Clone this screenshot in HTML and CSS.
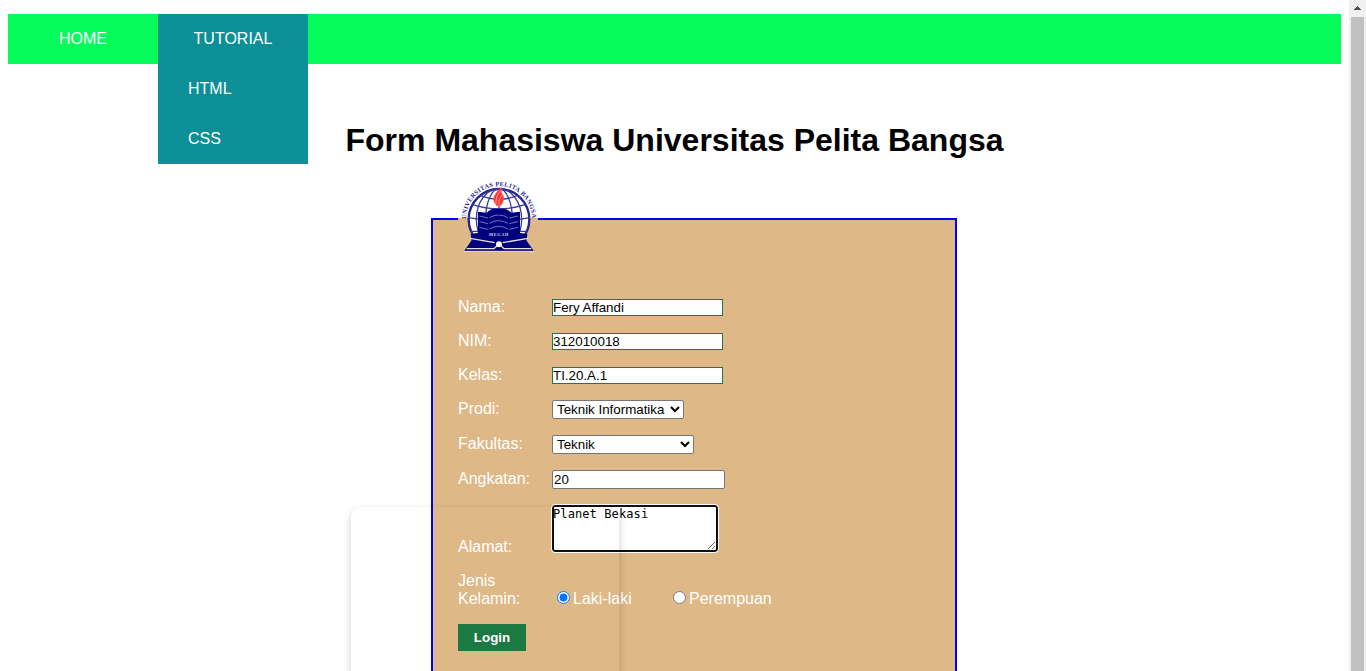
FILE: index.html
```html
<!DOCTYPE html>
<html lang="id">
<head>
<meta charset="utf-8">
<title>Form Mahasiswa</title>
<link rel="stylesheet" href="styles.css">
</head>
<body>
<div class="page">
  <nav class="menu">
    <a class="item">HOME</a>
    <div class="item open">TUTORIAL
      <div class="submenu"><a>HTML</a><a>CSS</a></div>
    </div>
  </nav>
  <h1>Form Mahasiswa Universitas Pelita Bangsa</h1>
  <form>
    <fieldset>
      <legend>
        <svg class="logo" viewBox="24 30 240 234">
          <defs><path id="ring" d="M48 147A99 99 0 0 1 246 147"/></defs>
          <circle cx="147" cy="148" r="92" fill="#fff"/>
          <g fill="none" stroke="#3a3a9a" stroke-width="4">
            <circle cx="147" cy="148" r="91" stroke="#26268f" stroke-width="7"/>
            <ellipse cx="147" cy="148" rx="68" ry="92"/>
            <ellipse cx="147" cy="148" rx="40" ry="92"/>
            <path d="M147 56V130M91 76Q147 100 203 76M66 103Q147 130 228 103M54 143Q147 160 240 143M62 184H232"/>
          </g>
          <path d="M84 125L110 128Q124 112 147 116Q170 112 184 128L210 125V190L147 220L84 190Z" fill="#00007f"/>
          <path d="M88 138L114 144M88 155L114 161M88 172L114 178M118 143Q146 127 174 143M118 160Q146 144 174 160M118 177Q146 161 174 177M178 144L204 138M178 161L204 155M178 178L204 172" fill="none" stroke="#6f6fb8" stroke-width="3"/>
          <path d="M62 192L86 188L147 214L206 188L232 192L230 212L252 244H42L64 212Z" fill="#00007f"/>
          <path d="M60 205L134 218M234 205L158 218M50 236H132L147 222L162 236H244" fill="none" stroke="#eee2d8" stroke-width="4"/>
          <path d="M42 244H252" stroke="#eee2d8" stroke-width="3"/>
          <circle cx="147" cy="223" r="9" fill="#fff"/>
          <path d="M154 53Q152 70 160 77Q164 98 145 113Q151 99 141 108Q128 95 132 80Q139 65 154 53Z" fill="#f33" stroke="#f55" stroke-width="2"/>
          <path d="M153 61Q136 78 138 102M156 75Q143 90 147 106" fill="none" stroke="#fcc" stroke-width="2"/>
          <text class="motto" x="146" y="198" textLength="58">MEGAH</text>
          <text class="ringtext"><textPath href="#ring" textLength="308">UNIVERSITAS PELITA BANGSA</textPath></text>
        </svg>
      </legend>
      <div class="row"><label>Nama:</label><input class="plain" type="text" value="Fery Affandi"></div>
      <div class="row"><label>NIM:</label><input class="plain" type="text" value="312010018"></div>
      <div class="row"><label>Kelas:</label><input class="plain" type="text" value="TI.20.A.1"></div>
      <div class="row pick"><label>Prodi:</label><select class="prodi"><option>Teknik Informatika</option></select></div>
      <div class="row pick"><label>Fakultas:</label><select class="fakultas"><option>Teknik</option></select></div>
      <div class="row pick"><label>Angkatan:</label><input class="year" type="text" value="20"></div>
      <div class="row area"><label>Alamat:</label><textarea spellcheck="false">Planet Bekasi</textarea></div>
      <div class="row gender"><label>Jenis Kelamin:</label>
        <span class="choice"><input type="radio" name="jk" checked>Laki-laki</span>
        <span class="choice"><input type="radio" name="jk">Perempuan</span>
      </div>
      <button type="button">Login</button>
    </fieldset>
  </form>
  <div class="card"></div>
</div>
<div class="scrollbar"><svg class="arrow" viewBox="0 0 17 17"><path d="M8 6h1v1h1v1h1v1h1v1H5V9h1V8h1V7h1z" fill="#505050"/></svg><div class="thumb"></div></div>
</body>
</html>
```
FILE: styles.css
```css
* { box-sizing: border-box; }
body { margin: 0; height: 671px; display: flex; overflow: hidden; background: #fff; font: 16px/18px "Liberation Sans", Arial, sans-serif; }
.page { position: relative; flex: 1; padding: 14px 8px 0; overflow: hidden; }
.menu { display: flex; height: 50px; background: #04fb59; color: #fff; line-height: 49px; }
.item { position: relative; width: 150px; height: 50px; text-align: center; }
.open { background: #0c8f97; }
.submenu { position: absolute; top: 50px; left: 0; width: 150px; background: #0c8f97; text-align: left; }
.submenu a { display: block; height: 50px; padding-left: 30px; }
h1 { margin: 58px 0 21px; font-size: 32px; line-height: 37px; text-align: center; }
fieldset { width: 526px; height: 540px; margin: 0 0 0 423px; padding: 41px 25px 0; border: 2px solid #0000f5; background: #deb887; color: #fff; }
legend { padding: 0; height: 78px; }
.logo { display: block; width: 80px; height: 78px; }
.ringtext { font: bold 19px "Liberation Serif", serif; fill: #26268f; }
.motto { font: bold 13px "Liberation Serif", serif; fill: #d8d8f0; text-anchor: middle; }
.row { display: flex; height: 34px; align-items: flex-start; }
.row label { width: 94px; padding-right: 20px; margin-top: -1px; }
input, select, textarea { margin: 0; font: 13.333px "Liberation Sans", Arial, sans-serif; color: #000; background: #fff; }
.plain { width: 171px; height: 17px; padding: 0; border: 1px solid #1a7a42; }
.pick { height: 35px; }
.pick select, .year { margin-top: -1px; }
select { height: 19px; border: 1px solid #767676; border-radius: 2px; padding: 0; }
.pick label { margin-top: -1px; }
.prodi { width: 132px; }
.fakultas { width: 142px; }
.year { width: 173px; height: 19px; border: 1px solid #767676; border-radius: 2px; padding: 0 1px; }
.area { height: 68px; }
.area label { margin-top: 32px; }
textarea { width: 166px; height: 47px; margin-top: -1px; padding: 0; border: 2px solid #101010; border-radius: 3px; outline: 1px solid #fff; font: 12px/14px "DejaVu Sans Mono", monospace; letter-spacing: .1px; text-indent: -1px; overflow: hidden; }
.gender { height: 50px; }
.gender label { margin-top: -2px; }
.choice { display: flex; width: 116px; margin-top: 16px; padding-left: 5px; gap: 3px; white-space: nowrap; }
.choice input { width: 13px; height: 13px; margin-top: 1px; }
button { display: block; width: 68px; height: 27px; padding: 0; border: 0; background: #1a7a42; color: #fff; font: bold 13.333px "Liberation Sans", Arial, sans-serif; }
.card { position: absolute; left: 351px; top: 507px; width: 268px; height: 300px; border-radius: 10px; box-shadow: 0 4px 8px rgba(0,0,0,.2); }
.scrollbar { width: 17px; padding: 0 2px; background: #f1f1f1; }
.arrow { display: block; width: 17px; height: 17px; margin-left: -2px; }
.thumb { height: 654px; background: #c1c1c1; }
```
